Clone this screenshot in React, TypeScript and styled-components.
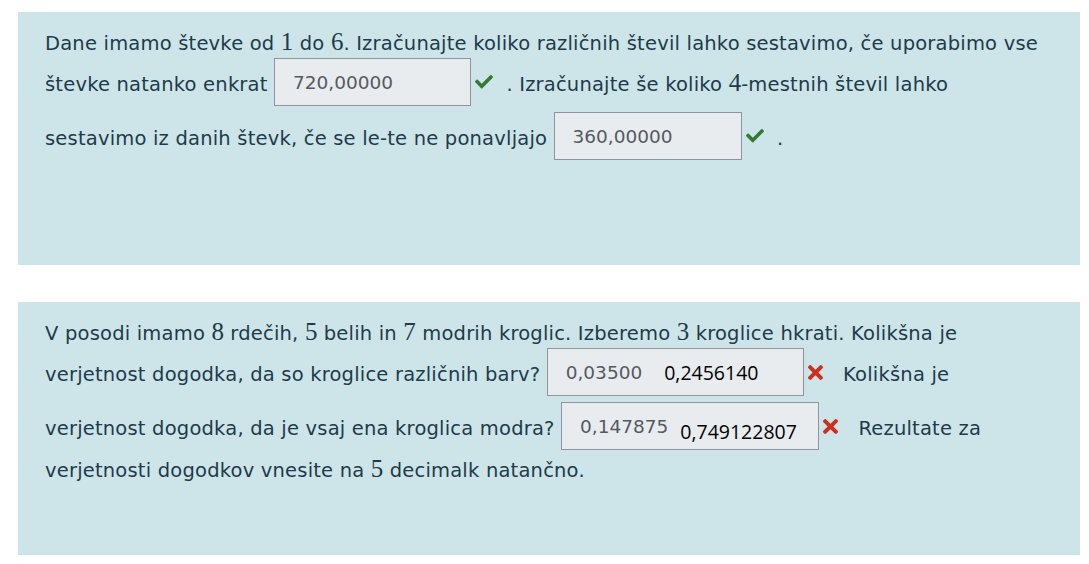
import React from "react";
import styled, { createGlobalStyle } from "styled-components";

const GlobalStyle = createGlobalStyle`
  html, body { margin: 0; padding: 0; background: #ffffff; }
  * { box-sizing: border-box; }
`;

const Page = styled.div`
  display: flex;
  flex-direction: column;
  gap: 37px;
  padding: 12px 9px 0 18px;
`;

const Panel = styled.section`
  background: #cde5e9;
  height: 253px;
  padding: 17px 10px 0 27px;
`;

const Para = styled.p`
  margin: 0;
  font-family: "DejaVu Sans", sans-serif;
  font-size: 19.5px;
  letter-spacing: 0.2px;
  line-height: 29px;
  color: #1d3b4a;
  white-space: nowrap;
`;

const M = styled.span`
  font-family: "Liberation Serif", "DejaVu Serif", serif;
  font-size: 25px;
  line-height: 1;
  letter-spacing: 0;
`;

const AnswerBox = styled.span<{ $w: number }>`
  display: inline-flex;
  align-items: center;
  vertical-align: middle;
  width: ${(p) => p.$w}px;
  height: 48px;
  margin-bottom: 6px;
  padding: 0 18px;
  background: #e8ecef;
  border: 1px solid #8f959e;
  font-family: "DejaVu Sans", sans-serif;
  font-size: 18.5px;
  letter-spacing: 0;
  color: #555a60;
`;

const Overlay = styled.span<{ $gap: number; $drop: number }>`
  margin-left: ${(p) => p.$gap}px;
  margin-top: ${(p) => p.$drop}px;
  font-family: "Open Sans", "Noto Sans", sans-serif;
  font-size: 19.5px;
  color: #000000;
`;

const Mark = styled.svg<{ $ml: number; $mr: number }>`
  display: inline-block;
  vertical-align: middle;
  margin: 0 ${(p) => p.$mr}px 6px ${(p) => p.$ml}px;
`;

const Check = ({ ml = 4, mr = 7 }: { ml?: number; mr?: number }) => (
  <Mark $ml={ml} $mr={mr} width="18" height="13.5" viewBox="0 64 512 384" aria-label="pravilno">
    <path
      fill="#357a32"
      d="M173.898 439.404l-166.4-166.4c-9.997-9.997-9.997-26.206 0-36.204l36.203-36.204c9.997-9.998 26.207-9.998 36.204 0L192 312.69 432.095 72.596c9.997-9.997 26.207-9.997 36.204 0l36.203 36.204c9.997 9.997 9.997 26.206 0 36.204l-294.4 294.401c-9.998 9.997-26.207 9.997-36.204-.001z"
    />
  </Mark>
);

const Cross = ({ ml = 4, mr = 14 }: { ml?: number; mr?: number }) => (
  <Mark $ml={ml} $mr={mr} width="15" height="15" viewBox="0 80 352 352" aria-label="napačno">
    <path
      fill="#ca3120"
      d="M242.72 256l100.07-100.07c12.28-12.28 12.28-32.19 0-44.48l-22.24-22.24c-12.28-12.28-32.19-12.28-44.48 0L176 189.28 75.93 89.21c-12.28-12.28-32.19-12.28-44.48 0L9.21 111.45c-12.28 12.28-12.28 32.19 0 44.48L109.28 256 9.21 356.07c-12.28 12.28-12.28 32.19 0 44.48l22.24 22.24c12.28 12.28 32.2 12.28 44.48 0L176 322.72l100.07 100.07c12.28 12.28 32.2 12.28 44.48 0l22.24-22.24c12.28-12.28 12.28-32.19 0-44.48L242.72 256z"
    />
  </Mark>
);

export default function App() {
  return (
    <>
      <GlobalStyle />
      <Page>
        <Panel>
          <Para>
            Dane imamo števke od <M>1</M> do <M>6</M>. Izračunajte koliko različnih števil lahko sestavimo, če uporabimo vse
            <br />
            števke natanko enkrat <AnswerBox $w={197}>720,00000</AnswerBox>
            <Check /> . Izračunajte še koliko <M>4</M>-mestnih števil lahko
            <br />
            sestavimo iz danih števk, če se le-te ne ponavljajo <AnswerBox $w={188}>360,00000</AnswerBox>
            <Check /> .
          </Para>
        </Panel>
        <Panel>
          <Para>
            V posodi imamo <M>8</M> rdečih, <M>5</M> belih in <M>7</M> modrih kroglic. Izberemo <M>3</M> kroglice hkrati. Kolikšna je
            <br />
            verjetnost dogodka, da so kroglice različnih barv?{" "}
            <AnswerBox $w={257}>
              0,03500<Overlay $gap={22} $drop={0}>0,2456140</Overlay>
            </AnswerBox>
            <Cross /> Kolikšna je
            <br />
            verjetnost dogodka, da je vsaj ena kroglica modra?{" "}
            <AnswerBox $w={258}>
              0,147875<Overlay $gap={12} $drop={10}>0,749122807</Overlay>
            </AnswerBox>
            <Cross /> Rezultate za
            <br />
            verjetnosti dogodkov vnesite na <M>5</M> decimalk natančno.
          </Para>
        </Panel>
      </Page>
    </>
  );
}
